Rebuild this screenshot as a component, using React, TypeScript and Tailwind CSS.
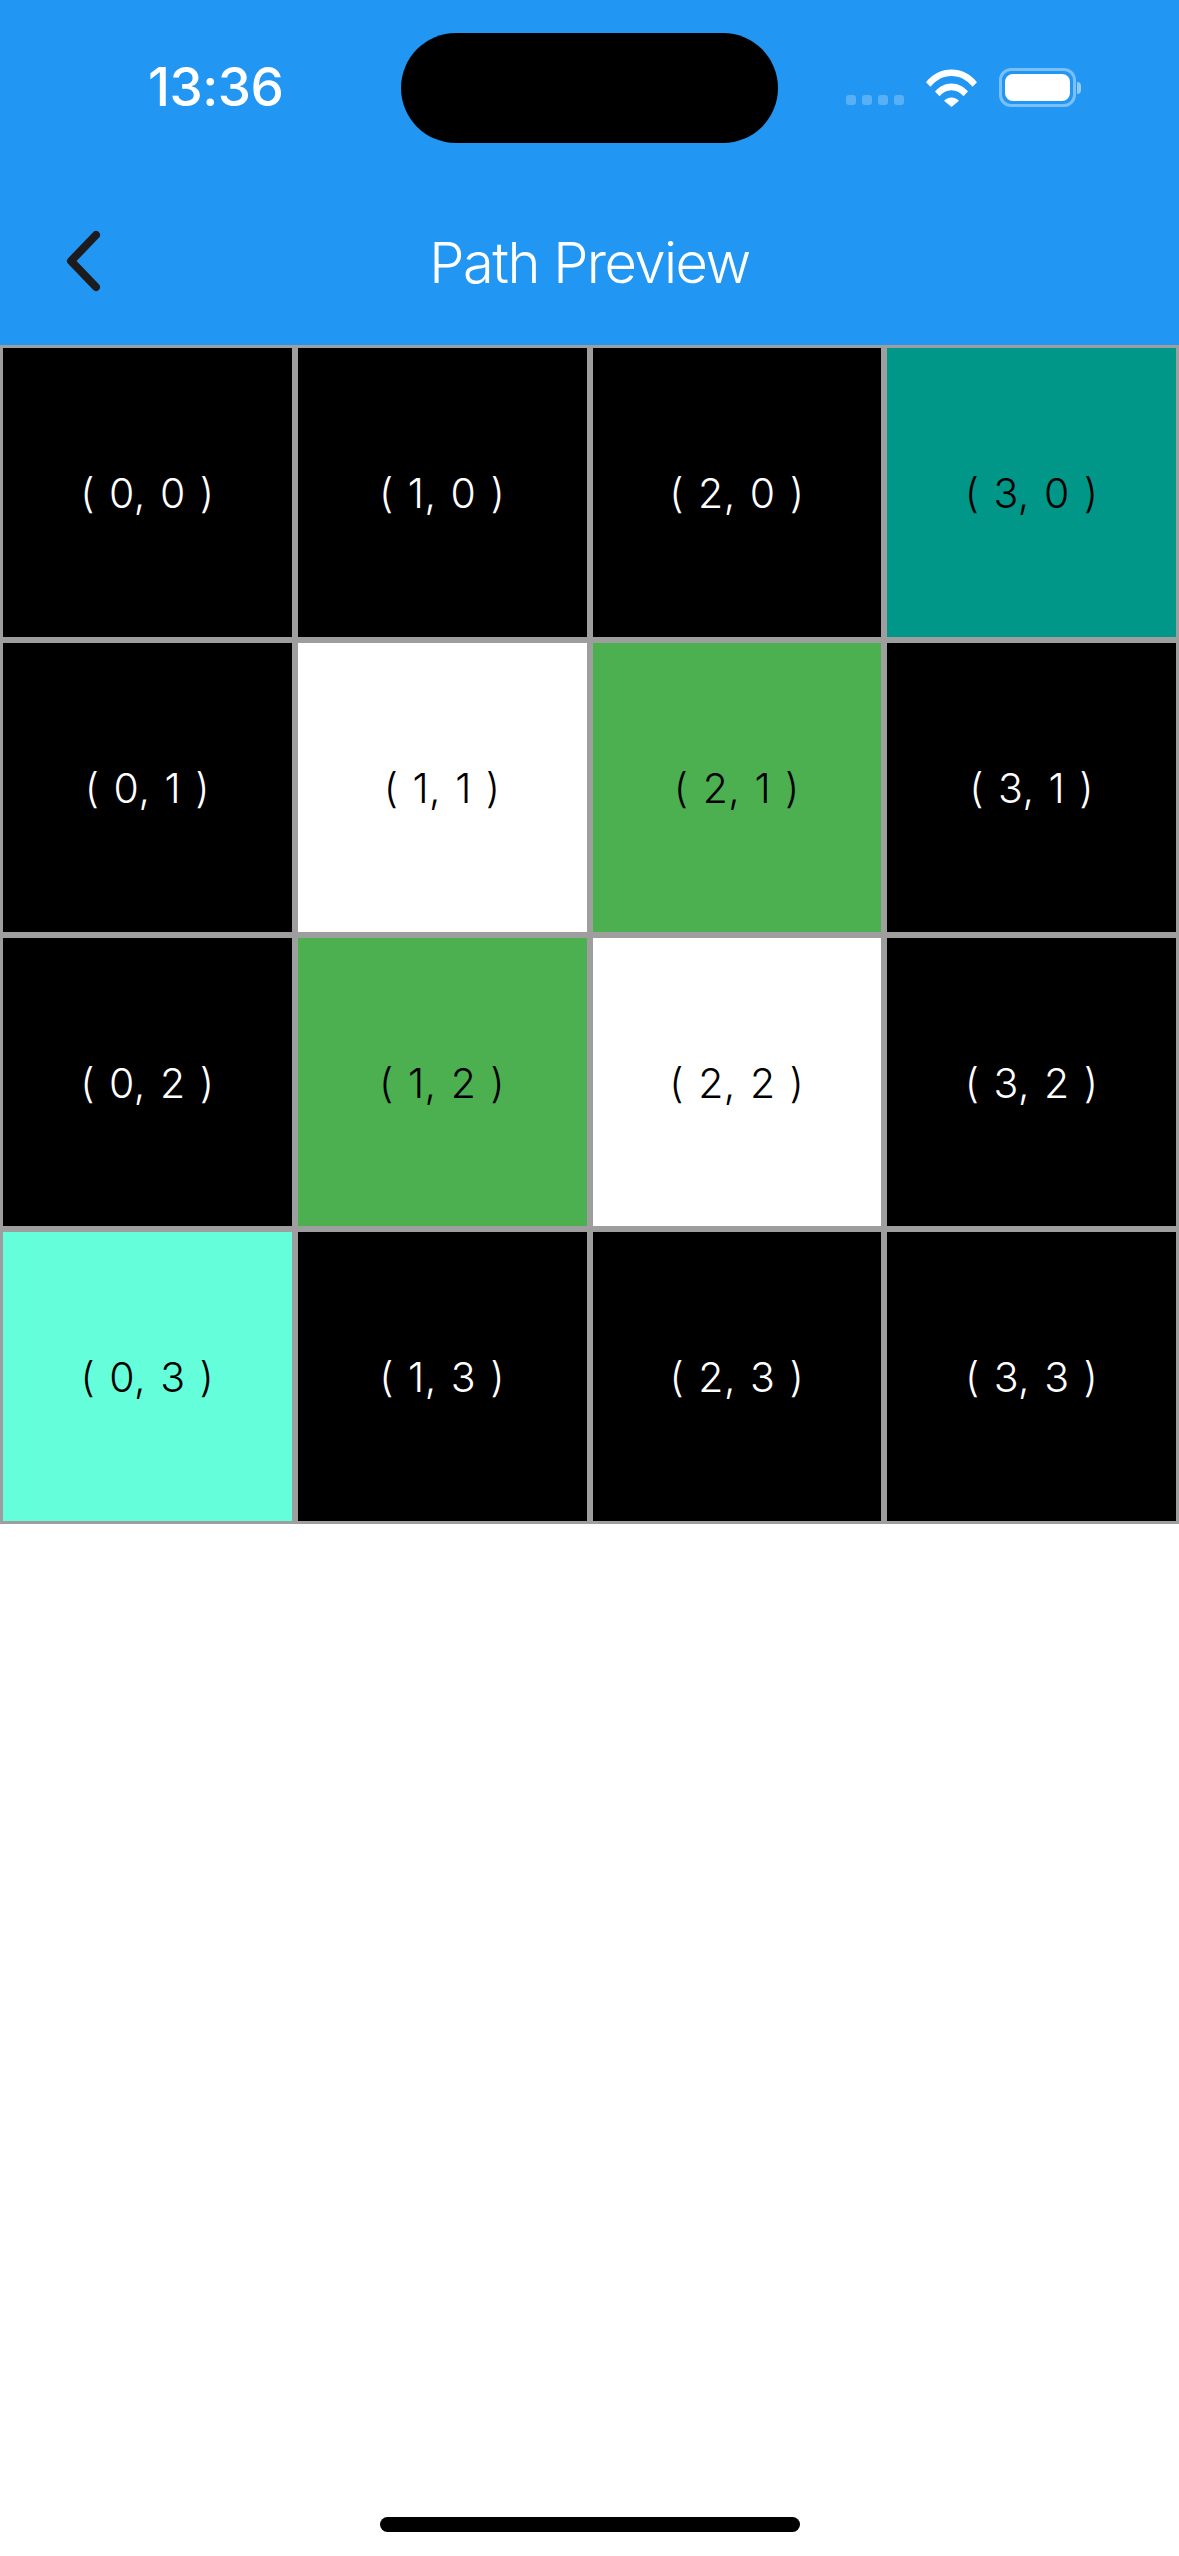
import React from 'react';

const FONT = 'font-["Inter","Liberation_Sans",sans-serif]';

const COLS = [0, 1, 2, 3];

function cellStyle(x: number, y: number) {
  if (x === 3 && y === 0) return 'bg-[#009688] text-black';
  if (x === 0 && y === 3) return 'bg-[#64ffda] text-black';
  if ((x === 2 && y === 1) || (x === 1 && y === 2)) return 'bg-[#4caf50] text-black';
  if ((x === 1 && y === 1) || (x === 2 && y === 2)) return 'bg-white text-black';
  return 'bg-black text-white';
}

function WifiIcon() {
  return (
    <svg width="51" height="38" viewBox="0 0 51 38" fill="white">
      <path d="M0 13.2C6.6 5 15.6 0.5 25.5 0.5S44.4 5 51 13.2L46.6 17.8C41 11 33.6 7 25.5 7S10 11 4.4 17.8Z" />
      <path d="M9 22.6C13.2 17.4 19 14.4 25.5 14.4S37.8 17.4 42 22.6L37.5 27.2C34.3 23.4 30.1 21.2 25.5 21.2S16.7 23.4 13.5 27.2Z" />
      <path d="M18 31.8C19.9 29.7 22.6 28.4 25.5 28.4S31.1 29.7 33 31.8L25.5 38Z" />
    </svg>
  );
}

function BatteryIcon() {
  return (
    <div className="flex items-center">
      <div className="w-[77px] h-[39px] rounded-[12px] border-[3px] border-white/40 p-[3px]">
        <div className="w-full h-full rounded-[8px] bg-white" />
      </div>
      <div className="ml-[1px] w-[4px] h-[12px] rounded-r-[4px] bg-white/50" />
    </div>
  );
}

function StatusBar() {
  return (
    <div className="h-[177px] flex items-start pl-[148px] pt-[33px]">
      <div className="w-[253px] mt-[29px] text-[53px] leading-[50px] font-medium text-white tracking-[-0.5px]">13:36</div>
      <div className="w-[377px] h-[110px] rounded-[55px] bg-black" />
      <div className="ml-[68px] mt-[35px] flex items-end">
        <div className="flex gap-[6px] mb-[2px]">
          {COLS.map((i) => (
            <div key={i} className="w-[10px] h-[10px] rounded-[3px] bg-white/25" />
          ))}
        </div>
        <div className="ml-[22px]">
          <WifiIcon />
        </div>
        <div className="ml-[22px]">
          <BatteryIcon />
        </div>
      </div>
    </div>
  );
}

export default function App() {
  return (
    <div className={`${FONT} w-[1179px] h-[2556px] flex flex-col bg-white`}>
      <div className="h-[345px] bg-[#2196f3]">
        <StatusBar />
        <div className="h-[168px] flex items-center">
          <div className="w-[150px] pl-[62px]">
            <svg width="42" height="62" viewBox="0 0 42 62" fill="none" stroke="#1c1c1e" strokeWidth="8" strokeLinecap="round" strokeLinejoin="round">
              <path d="M34 5L9 31L34 57" />
            </svg>
          </div>
          <div className="flex-1 pt-[3px] text-center text-[56px] leading-[64px] font-light tracking-[-1.5px] text-white">Path Preview</div>
          <div className="w-[150px]" />
        </div>
      </div>

      <div className="grid grid-cols-4">
        {COLS.map((y) =>
          COLS.map((x) => (
            <div
              key={`${x}-${y}`}
              className={`aspect-square flex items-center justify-center pt-[3px] border-[3px] border-[#9e9e9e] text-[41px] font-[350] tracking-[0.5px] [word-spacing:2px] ${cellStyle(x, y)}`}
            >
              {`( ${x}, ${y} )`}
            </div>
          )),
        )}
      </div>

      <div className="flex-1 flex items-end justify-center pb-[24px]">
        <div className="w-[420px] h-[15px] rounded-full bg-black" />
      </div>
    </div>
  );
}
